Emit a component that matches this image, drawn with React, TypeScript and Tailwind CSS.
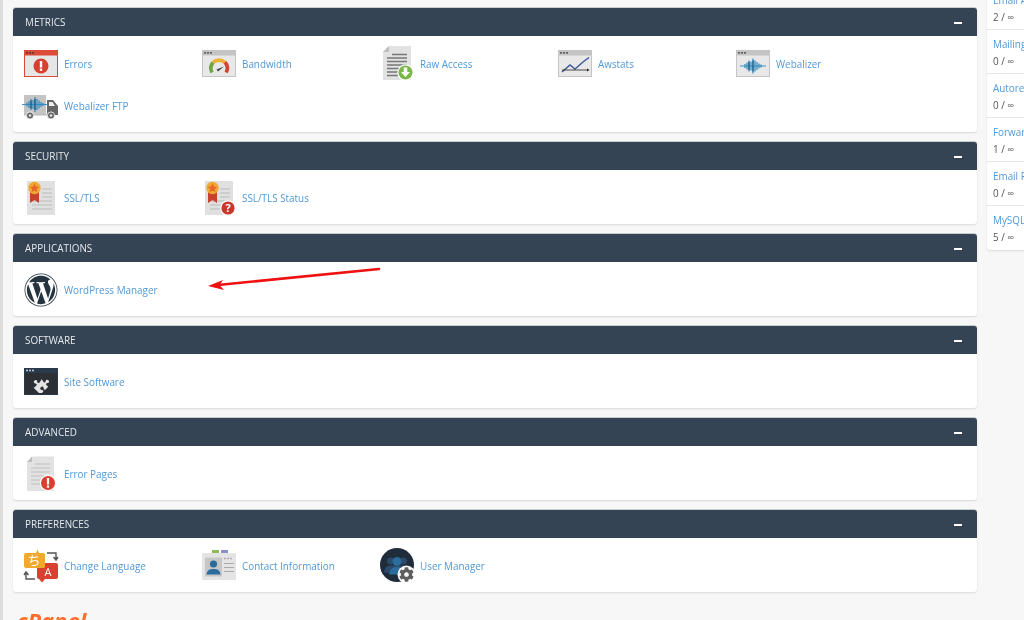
import React from 'react';
import { FaWordpress, FaPuzzlePiece, FaCog } from 'react-icons/fa';

interface WindowProps {
  frame?: string;
  inner?: string;
  children?: React.ReactNode;
}

// 34x27 browser-window shape most of the cPanel icons are built on
const WindowIcon = ({
  frame = '#c4c4c4',
  inner = '#e8e8e8',
  children,
}: WindowProps): React.ReactElement => (
  <svg width="34" height="36" viewBox="0 0 34 36" className="overflow-visible">
    <rect x="0" y="4" width="34" height="27" fill={frame} />
    <rect x="1" y="9.5" width="32" height="20.5" fill={inner} />
    <circle cx="3" cy="6.8" r="0.9" fill="#333" />
    <circle cx="6" cy="6.8" r="0.9" fill="#333" />
    <circle cx="9" cy="6.8" r="0.9" fill="#333" />
    {children}
  </svg>
);

const Wave = ({ dx = 0, dy = 0 }: { dx?: number; dy?: number }): React.ReactElement => (
  <g transform={`translate(${dx} ${dy})`} stroke="#2a87c0" strokeWidth="1.2">
    <path d="M4 20H30" strokeWidth="0.9" />
    <path d="M9 18v4M11 16.5v7M13 14.5v11M15 15.5v9M17 12.5v15M19 14.5v11M21 16v8M23 17.5v5M25 18.5v3" />
    <path d="M13 16v8M17 14.5v11" stroke="#14587f" />
  </g>
);

const ErrorsIcon = (): React.ReactElement => (
  <WindowIcon frame="#dc4a38" inner="#e6e6e6">
    <circle cx="17" cy="20" r="7.5" fill="#d93f2e" />
    <rect x="15.8" y="15" width="2.4" height="6.5" fill="#fff" />
    <rect x="15.8" y="22.5" width="2.4" height="2.4" fill="#fff" />
  </WindowIcon>
);

const BandwidthIcon = (): React.ReactElement => (
  <WindowIcon>
    <path d="M10 26.5a9 9 0 0 1 1-10" fill="none" stroke="#6fa53f" strokeWidth="3.6" />
    <path d="M11 16.5a9 9 0 0 1 12-.2" fill="none" stroke="#eeb030" strokeWidth="3.6" />
    <path d="M23 16.3a9 9 0 0 1 1.2 10.2" fill="none" stroke="#d8402f" strokeWidth="3.6" />
    <path d="M14.5 23.5l7.5-3-6 5z" fill="#444" />
  </WindowIcon>
);

const RawAccessIcon = (): React.ReactElement => (
  <svg width="34" height="36" viewBox="0 0 34 36" className="overflow-visible">
    <path d="M9 0H31V34H3V6z" fill="#e2e2e2" />
    <path d="M9 0V6H3z" fill="#bdbdbd" />
    <path d="M12 8.500H27M7 12H27M7 15.500H27M7 19H27M7 22.500H22M7 26H18M7 29.500H18" stroke="#777" strokeWidth="1.300" />
    <circle cx="25.500" cy="26.500" r="8.200" fill="#fff" />
    <circle cx="25.500" cy="26.500" r="7" fill="#7ab648" />
    <path d="M23.700 21.500h3.600v4.500h2.700l-4.500 5-4.500-5h2.700z" fill="#fff" />
  </svg>
);

const AwstatsIcon = (): React.ReactElement => (
  <WindowIcon>
    <path d="M4 26L12 19L17 23L25 16L31 11.500" fill="none" stroke="#3f5a9a" strokeWidth="1.500" />
    <path d="M4 24H30" stroke="#222" strokeWidth="0.8" />
    <path d="M29 22.500L31.500 24L29 25.500z" fill="#222" />
  </WindowIcon>
);

const WebalizerIcon = (): React.ReactElement => (
  <WindowIcon>
    <Wave />
  </WindowIcon>
);

const TruckIcon = (): React.ReactElement => (
  <svg width="34" height="36" viewBox="0 0 34 36" className="overflow-visible">
    <rect x="0" y="7" width="22" height="19" fill="#c4c4c4" />
    <path d="M23 12H29L34 18V27H23z" fill="#666" />
    <path d="M25 14H28.500L31 18H25z" fill="#eee" />
    <rect x="0" y="26" width="23" height="1.500" fill="#bbb" />
    <circle cx="6" cy="27.500" r="3.600" fill="#666" stroke="#fff" strokeWidth="0.8" />
    <circle cx="6" cy="27.500" r="1.300" fill="#e8e8e8" />
    <circle cx="27" cy="27.500" r="3.600" fill="#666" stroke="#fff" strokeWidth="0.8" />
    <circle cx="27" cy="27.500" r="1.300" fill="#e8e8e8" />
    <Wave dx={-6} dy={-3.500} />
  </svg>
);

const CertIcon = ({ badge }: { badge?: boolean }): React.ReactElement => (
  <svg width="34" height="36" viewBox="0 0 34 36" className="overflow-visible">
    <rect x="3" y="1" width="28" height="34" fill="#e0e0e0" />
    <path d="M18 9H28M18 13H28M18 17H28M8 21H28M8 25H28M8 29H28" stroke="#bbb" strokeWidth="1" />
    <path d="M6 12V23L10.500 20L15 23V12z" fill="#c9402d" />
    <circle cx="10.500" cy="8" r="6.200" fill="#f0a830" />
    <path d="M10.500 3.600l1.400 2.900 3.100.4-2.300 2.100.6 3.100-2.800-1.500-2.800 1.500.6-3.100L6 6.900l3.100-.4z" fill="#e8662c" />
    {badge && (
      <g>
        <circle cx="26" cy="28" r="7.800" fill="#fff" />
        <circle cx="26" cy="28" r="6.600" fill="#c9392b" />
        <text x="26" y="32" textAnchor="middle" fontSize="11" fontWeight="700" fill="#fff" fontFamily="Open Sans, sans-serif">?</text>
      </g>
    )}
  </svg>
);

const WordPressIcon = (): React.ReactElement => (
  <FaWordpress size={34} color="#25343f" />
);

const SiteSoftwareIcon = (): React.ReactElement => (
  <svg width="34" height="36" viewBox="0 0 34 36" className="overflow-visible">
    <rect x="0" y="4" width="34" height="27" fill="#293a4b" />
    <rect x="1" y="9" width="32" height="21" fill="#2c2f33" />
    <circle cx="3" cy="6.500" r="0.9" fill="#dde" />
    <circle cx="6" cy="6.500" r="0.9" fill="#dde" />
    <circle cx="9" cy="6.500" r="0.9" fill="#dde" />
    <foreignObject x="8" y="10.500" width="18" height="18">
      <FaPuzzlePiece size={16} color="#e4e4e4" className="ml-px mt-px -rotate-45" />
    </foreignObject>
  </svg>
);

const ErrorPagesIcon = (): React.ReactElement => (
  <svg width="34" height="36" viewBox="0 0 34 36" className="overflow-visible">
    <path d="M8 0.500H30V35H3V6z" fill="#e2e2e2" />
    <path d="M8 0.500V6H3z" fill="#bdbdbd" />
    <path d="M11 8H26M7 12H26M7 16H26M7 20H26M7 24H18M7 28H18" stroke="#bdbdbd" strokeWidth="1.100" />
    <circle cx="24" cy="27" r="8.200" fill="#fff" />
    <circle cx="24" cy="27" r="7" fill="#d93f2e" />
    <rect x="22.900" y="22" width="2.200" height="6.500" fill="#fff" />
    <rect x="22.900" y="29.500" width="2.200" height="2.200" fill="#fff" />
  </svg>
);

const LanguageIcon = (): React.ReactElement => (
  <svg width="34" height="36" viewBox="0 0 34 36" className="overflow-visible">
    <path d="M2 5H12L13.500 1.500L15 5H19.500A2 2 0 0 1 21 7V18A2 2 0 0 1 19.500 20H2A2 2 0 0 1 0 18V7A2 2 0 0 1 2 5z" fill="#f0a92e" />
    <path d="M21 15H32A2 2 0 0 1 34 17V29A2 2 0 0 1 32 31H21L18 34.500L15 31A2 2 0 0 1 13 29V20H19.500A2 2 0 0 0 21 18z" fill="#d8402f" />
    <text x="10" y="17" textAnchor="middle" fontSize="13" fill="#fff" fontFamily="'Noto Sans CJK JP', sans-serif">ち</text>
    <text x="24" y="28" textAnchor="middle" fontSize="11" fill="#fff" fontFamily="Open Sans, sans-serif">A</text>
    <path d="M23 5H32V11M29.500 9L32 12L34 9" fill="none" stroke="#555" strokeWidth="1.400" />
    <path d="M11 31H2V25M0 27L2 24L4.500 27" fill="none" stroke="#555" strokeWidth="1.400" />
  </svg>
);

const ContactIcon = (): React.ReactElement => (
  <svg width="34" height="36" viewBox="0 0 34 36" className="overflow-visible">
    <rect x="0" y="5" width="34" height="27" rx="1" fill="#e4e4e4" />
    <rect x="10" y="2" width="7" height="3" fill="#8dbb5a" />
    <rect x="19" y="2" width="7" height="3" fill="#8a8fc9" />
    <rect x="3" y="9.500" width="17" height="19" fill="#c6c6c6" />
    <circle cx="11.500" cy="16" r="3.600" fill="#2a6c9c" />
    <path d="M4.500 26.500C5 22 8 21 11.500 21S18 22 18.500 26.500z" fill="#2a6c9c" />
    <path d="M22 10.500H31" stroke="#aaa" strokeWidth="1.600" strokeDasharray="2 1" />
    <path d="M22 15.500H32M22 19.500H32M22 23.500H32" stroke="#aaa" strokeWidth="1.100" />
  </svg>
);

const UserManagerIcon = (): React.ReactElement => (
  <svg width="34" height="36" viewBox="0 0 34 36" className="overflow-visible">
    <circle cx="17" cy="17" r="17" fill="#1f2c3a" />
    <circle cx="10.500" cy="13" r="3.400" fill="#2c4a6b" />
    <circle cx="23.500" cy="13" r="3.400" fill="#2c4a6b" />
    <path d="M4 24.500C4.500 19.500 7 17.500 11 17.500H23C27 17.500 29.500 19.500 30 24.500z" fill="#2c4a6b" />
    <circle cx="17" cy="13.500" r="4.500" fill="#2a6c9c" />
    <path d="M9 26.500C9.500 21 12.500 19 17 19S24.500 21 25 26.500z" fill="#2a6c9c" />
    <circle cx="26.500" cy="26.500" r="9" fill="#fff" />
    <foreignObject x="19" y="19" width="15" height="15">
      <FaCog size={15} color="#5e5e5e" />
    </foreignObject>
  </svg>
);

interface SectionItem {
  label: string;
  icon: React.ReactElement;
}

interface Section {
  title: string;
  items: SectionItem[];
}

const sections: Section[] = [
  {
    title: 'METRICS',
    items: [
      { label: 'Errors', icon: <ErrorsIcon /> },
      { label: 'Bandwidth', icon: <BandwidthIcon /> },
      { label: 'Raw Access', icon: <RawAccessIcon /> },
      { label: 'Awstats', icon: <AwstatsIcon /> },
      { label: 'Webalizer', icon: <WebalizerIcon /> },
      { label: 'Webalizer FTP', icon: <TruckIcon /> },
    ],
  },
  {
    title: 'SECURITY',
    items: [
      { label: 'SSL/TLS', icon: <CertIcon /> },
      { label: 'SSL/TLS Status', icon: <CertIcon badge /> },
    ],
  },
  {
    title: 'APPLICATIONS',
    items: [{ label: 'WordPress Manager', icon: <WordPressIcon /> }],
  },
  {
    title: 'SOFTWARE',
    items: [{ label: 'Site Software', icon: <SiteSoftwareIcon /> }],
  },
  {
    title: 'ADVANCED',
    items: [{ label: 'Error Pages', icon: <ErrorPagesIcon /> }],
  },
  {
    title: 'PREFERENCES',
    items: [
      { label: 'Change Language', icon: <LanguageIcon /> },
      { label: 'Contact Information', icon: <ContactIcon /> },
      { label: 'User Manager', icon: <UserManagerIcon /> },
    ],
  },
];

const stats = [
  { label: 'Email Accounts', value: '2 / ∞' },
  { label: 'Mailing Lists', value: '0 / ∞' },
  { label: 'Autoresponders', value: '0 / ∞' },
  { label: 'Forwarders', value: '1 / ∞' },
  { label: 'Email Filters', value: '0 / ∞' },
  { label: 'MySQL® Databases', value: '5 / ∞' },
];

const Panel = ({ section }: { section: Section }): React.ReactElement => (
  <div className="rounded-[3px] bg-white shadow-[0_1px_2px_rgba(0,0,0,0.12)]">
    <div className="flex h-7 items-center justify-between rounded-t-[3px] bg-[#344454] pl-3 pr-[15px] pt-px text-[9.9px] text-[#e6e9ec] shadow-[0_-1px_0_#c9ccd0]">
      <span>{section.title}</span>
      <span className="h-[2px] w-2 bg-white" />
    </div>
    <div className="flex flex-wrap px-[11px] pb-[5px] pt-[7px]">
      {section.items.map((item) => (
        <a key={item.label} className="flex h-[42px] w-[178px] items-center gap-[6px] text-[9.9px] text-[#5098d8]">
          <span className="flex h-9 w-[34px] shrink-0 items-center">{item.icon}</span>
          <span>{item.label}</span>
        </a>
      ))}
    </div>
  </div>
);

const App = (): React.ReactElement => (
  <div className="relative flex h-[620px] w-[1024px] overflow-hidden bg-[#f7f7f7] font-['Open_Sans',sans-serif] blur-[0.35px]">
    <div className="w-[3px] shrink-0 bg-[#dcdcdc]" />
    <main className="flex w-[974px] shrink-0 flex-col gap-[10px] pl-[10px] pt-2">
      {sections.map((section) => (
        <Panel key={section.title} section={section} />
      ))}
      <div className="mt-[4px] flex items-start gap-[6px] pl-1">
        <span className="text-[22px] font-bold italic leading-7 text-[#ff6c2c]">cPanel</span>
        <span className="mt-[10px] text-[8px] leading-3 text-[#777]">76.0.20</span>
      </div>
    </main>
    <aside className="ml-[10px] mt-[-14px] h-fit w-[120px] shrink-0 rounded-b-[3px] bg-white shadow-[0_1px_2px_rgba(0,0,0,0.12)]">
      {stats.map((stat) => (
        <div key={stat.label} className="flex h-11 flex-col justify-center whitespace-nowrap border-b border-[#e4e4e4] px-[6px] pt-[2px] text-[9.9px] leading-[17px] last:border-b-0">
          <span className="text-[#5098d8]">{stat.label}</span>
          <span className="text-[#555]">{stat.value}</span>
        </div>
      ))}
    </aside>
    {/* annotation arrow drawn over the screenshot */}
    <svg className="absolute left-[200px] top-[260px]" width="190" height="35" viewBox="0 0 190 35">
      <path d="M179 9L18 25" stroke="#f01010" strokeWidth="2.600" strokeLinecap="round" />
      <path d="M8 26L23 20L19.500 25L24 30z" fill="#f01010" />
    </svg>
  </div>
);

export default App;
